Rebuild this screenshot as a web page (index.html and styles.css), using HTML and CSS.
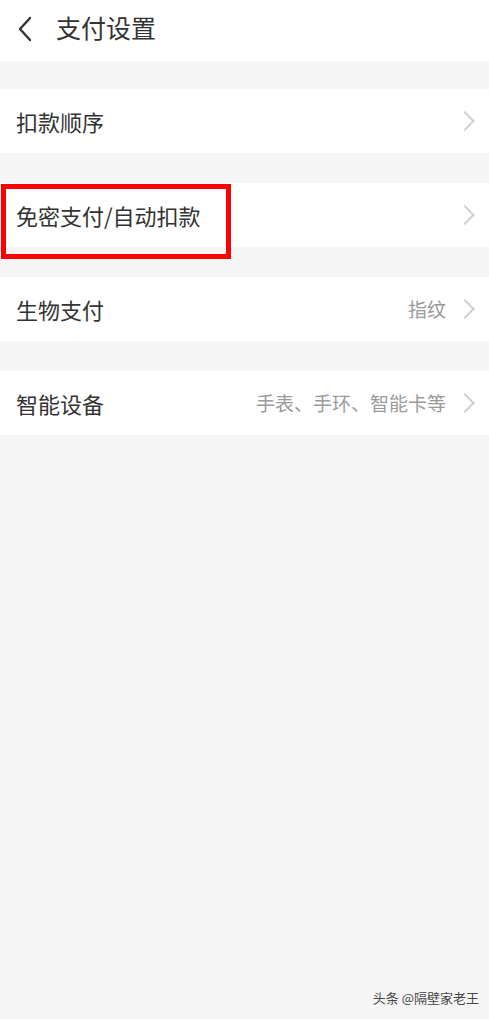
FILE: index.html
```html
<!DOCTYPE html>
<html lang="zh-CN">
<head>
    <meta charset="UTF-8">
    <meta name="viewport" content="width=device-width, initial-scale=1.0">
    <title>支付设置</title>
    <link rel="stylesheet" href="styles.css">
</head>
<body>

    <div class="page">
        <!-- Top bar -->
        <div class="topbar">
            <svg class="back" width="18" height="28" viewBox="0 0 18 28">
                <path d="M14 3 L4 14 L14 25" fill="none" stroke="#333" stroke-width="2.4" stroke-linecap="round" stroke-linejoin="round"/>
            </svg>
            <span class="title">支付设置</span>
        </div>

        <div class="group first">
            <div class="row">
                <span class="label">扣款顺序</span>
                <span class="chev"></span>
            </div>
        </div>

        <div class="group">
            <div class="row">
                <span class="label">免密支付/自动扣款</span>
                <span class="chev"></span>
            </div>
            <!-- highlight frame drawn over the row -->
            <div class="mark"></div>
        </div>

        <div class="group">
            <div class="row">
                <span class="label">生物支付</span>
                <span class="value">指纹</span>
                <span class="chev"></span>
            </div>
        </div>

        <div class="group">
            <div class="row">
                <span class="label">智能设备</span>
                <span class="value">手表、手环、智能卡等</span>
                <span class="chev"></span>
            </div>
        </div>

        <div class="watermark">头条 @隔壁家老王</div>
    </div>

</body>
</html>
```

FILE: styles.css
```css
body, html {
    margin: 0;
    padding: 0;
    height: 100%;
    overflow: hidden;
}

body {
    background-color: #f5f5f5;
    font-family: "Noto Sans CJK SC", "Noto Sans", sans-serif;
    color: #333;
}

.page {
    position: relative;
    height: 100vh;
}

.topbar {
    height: 61px;
    background-color: #fff;
    display: flex;
    align-items: center;
    padding-left: 16px;
    gap: 22px;
}

.back {
    display: block;
    margin-top: -4px;
}

.title {
    font-size: 25px;
    line-height: 1;
    margin-top: -6px;
}

.group {
    position: relative;
    margin-top: 30px;
}

.group.first {
    margin-top: 28px;
}

.row {
    height: 64px;
    background-color: #fff;
    display: flex;
    align-items: center;
    padding: 0 16px;
    box-sizing: border-box;
}

.label {
    font-size: 22px;
    flex: 1;
    line-height: 1;
    margin-top: 0;
}

.value {
    font-size: 19px;
    color: #9a9a9a;
    margin-right: 12px;
    line-height: 1;
    margin-top: -1px;
}

/* right arrow */
.chev {
    width: 12px;
    height: 12px;
    border-top: 2px solid #cfcfcf;
    border-right: 2px solid #cfcfcf;
    transform: rotate(45deg);
    margin-right: 1px;
    margin-top: 0;
}

.mark {
    position: absolute;
    left: 1px;
    top: 1px;
    width: 230px;
    height: 75px;
    border: 5px solid #ff0000;
    box-sizing: border-box;
}

.watermark {
    position: absolute;
    right: 10px;
    bottom: 12px;
    font-size: 13px;
    color: #444;
    text-shadow: 0 0 2px #fff;
}
```
